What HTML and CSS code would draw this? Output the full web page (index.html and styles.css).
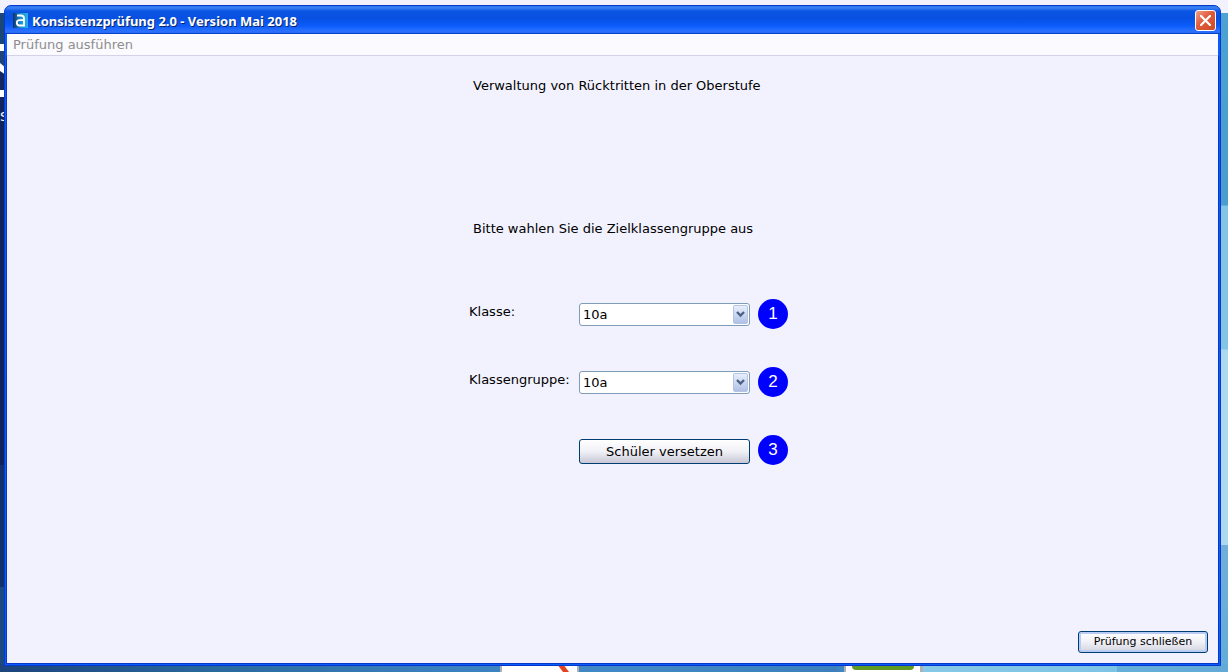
FILE: index.html
```html
<!DOCTYPE html>
<html lang="de">
<head>
    <meta charset="UTF-8">
    <meta name="viewport" content="width=device-width, initial-scale=1.0">
    <title>Konsistenzprüfung 2.0</title>
    <link rel="stylesheet" href="styles.css">
</head>
<body>
    <!-- Desktop behind the window -->
    <div class="desktop" aria-hidden="true">
        <div class="edge-left">
            <svg width="6" height="92" viewBox="0 13 6 92">
                <rect y="13" width="6" height="31" fill="#1b4778"/>
                <rect y="44" width="6" height="7" fill="#fff"/>
                <path d="M0 51h6v39H0z" fill="#13285f"/>
                <path d="M0 51h6v18L0 63z" fill="#1e4478"/>
                <path d="M0 63l6 5v7l-6-4z" fill="#fff"/>
                <rect y="90" width="6" height="7" fill="#fff"/>
                <rect y="97" width="6" height="8" fill="#12255e"/>
            </svg>
            <span class="edge-text">S</span>
        </div>
        <div class="edge-right"></div>
        <div class="edge-bottom">
            <svg class="tile tile-one" width="79" height="8" viewBox="0 0 79 8">
                <rect width="79" height="8" fill="#adb0b5"/>
                <rect x="2" width="75" height="8" fill="#fff"/>
                <path d="M57 0h6l6 8h-6z" fill="#e2431e"/>
            </svg>
            <svg class="tile tile-two" width="79" height="8" viewBox="0 0 79 8">
                <rect width="79" height="8" fill="#adb0b5"/>
                <rect x="2" width="74" height="8" fill="#fff"/>
                <path d="M8 0h62v2q0 4-4 4H12q-4 0-4-4z" fill="#5f9a24"/>
            </svg>
        </div>
    </div>

    <div class="window">
        <header class="title-bar">
            <svg class="app-icon" width="15" height="15" viewBox="0 0 15 15">
                <defs>
                    <linearGradient id="iconFill">
                        <stop offset="0" stop-color="#12306b"/>
                        <stop offset="0.5" stop-color="#1c8fcc"/>
                        <stop offset="1" stop-color="#27b0ea"/>
                    </linearGradient>
                </defs>
                <rect width="15" height="15" fill="url(#iconFill)"/>
                <path d="M4 2.500h4q3 0 3 3v7H6.500q-2.700 0-2.700-2.700T6.500 7.100H11" fill="none" stroke="#fff" stroke-width="1.800"/>
            </svg>
            <h1>Konsistenzprüfung 2.0 - Version Mai 2018</h1>
            <button type="button" class="close-button" aria-label="Schließen">
                <svg width="11" height="11" viewBox="0 0 11 11">
                    <path d="M1 1l9 9M10 1l-9 9" stroke="#fff" stroke-width="2.200" stroke-linecap="square"/>
                </svg>
            </button>
        </header>
        <nav class="menu-bar">
            <button type="button" class="menu-item" disabled>Prüfung ausführen</button>
        </nav>
        <main class="content">
            <form class="panel">
                <p class="heading">Verwaltung von Rücktritten in der Oberstufe</p>
                <p class="hint">Bitte wahlen Sie die Zielklassengruppe aus</p>
                <div class="row">
                    <label for="klasse">Klasse:</label>
                    <div class="select-box">
                        <select id="klasse"><option>10a</option></select>
                        <span class="arrow"><svg width="9" height="7" viewBox="0 0 9 7"><path d="M1 1l3.500 3.500L8 1" fill="none" stroke="#4d6185" stroke-width="2.400"/></svg></span>
                    </div>
                    <span class="badge">1</span>
                </div>
                <div class="row">
                    <label for="klassengruppe">Klassengruppe:</label>
                    <div class="select-box">
                        <select id="klassengruppe"><option>10a</option></select>
                        <span class="arrow"><svg width="9" height="7" viewBox="0 0 9 7"><path d="M1 1l3.500 3.500L8 1" fill="none" stroke="#4d6185" stroke-width="2.400"/></svg></span>
                    </div>
                    <span class="badge">2</span>
                </div>
                <div class="row">
                    <button type="button" class="button move-button">Schüler versetzen</button>
                    <span class="badge">3</span>
                </div>
            </form>
            <footer class="footer">
                <button type="button" class="button exit-button">Prüfung schließen</button>
            </footer>
        </main>
    </div>
</body>
</html>
```
FILE: styles.css
```css
* {
    box-sizing: border-box;
}
body {
    margin: 0;
    padding: 5px 7px 6px 4px;
    min-height: 100vh;
    display: flex;
    position: relative;
    background: #f2f2ff;
    font-family: Verdana, "DejaVu Sans", sans-serif;
    font-size: 13px;
    line-height: 16px;
    color: #000;
}
h1, p {
    margin: 0;
}
button, select {
    font-family: inherit;
    font-size: inherit;
    line-height: inherit;
    color: inherit;
}

/* Desktop */
.desktop {
    position: absolute;
    inset: 13px 0 0 0;
    overflow: hidden;
}
.edge-left, .edge-right {
    position: absolute;
    top: 0;
    bottom: 0;
    width: 9px;
}
.edge-left {
    left: 0;
    background: linear-gradient(#12245c 0, #11225b 452px, #12306b 452px, #12306b 574px, #1c4980 574px);
}
.edge-left svg {
    display: block;
}
.edge-text {
    display: block;
    padding-top: 4px;
    color: #fff;
}
.edge-right {
    right: 0;
    background: linear-gradient(#4ca2d4 0, #4b9dce 192px, #84c4e4 193px, #84c4e4 336px, #acd9f0 337px, #acd9f0 532px, #70afd9 532px, #63add9 100%);
}
.edge-bottom {
    position: absolute;
    left: 0;
    right: 0;
    bottom: 0;
    height: 8px;
    background: linear-gradient(to right, #1c437c 0, #296a9f 18%, #3a7fbd 35%, #4189c6 50%, #3b80bd 68%, #86c8e7 75%, #7cc4e6 91%, #65b0da 91%, #62a9d7 100%);
}
.tile {
    position: absolute;
    top: 0;
}
.tile-one {
    left: 500px;
}
.tile-two {
    left: 844px;
}

/* Window */
.window {
    position: relative;
    flex: 1;
    display: flex;
    flex-direction: column;
    border: 1px solid #0838c8;
    border-radius: 7px 7px 0 0;
    background: #0a5cff;
}
.title-bar {
    display: flex;
    align-items: center;
    height: 28px;
    padding: 2px 4px 0 8px;
    border-radius: 6px 6px 0 0;
    border-bottom: 1px solid #0a42c8;
    background: linear-gradient(#2c78f0 0, #3a80f4 2px, #0b56e4 5px, #0750e0 12px, #0b5cfb 20px, #2c71ff 25px, #2868f5 27px);
}
.title-bar h1 {
    flex: 1;
    margin-left: 4px;
    font-family: "Trebuchet MS", "Noto Sans", sans-serif;
    font-size: 13px;
    font-weight: bold;
    color: #fff;
    text-shadow: 1px 1px 0 #0a246a;
}
.close-button {
    display: flex;
    align-items: center;
    justify-content: center;
    width: 21px;
    height: 21px;
    padding: 0;
    border: 1px solid #fff;
    border-radius: 3px;
    background: linear-gradient(135deg, #f0a08c, #df5b3c 45%, #d04a26);
}
.menu-bar {
    display: flex;
    height: 22px;
    margin: 0 2px;
    padding: 0 6px;
    border-bottom: 1px solid #d4d2e6;
    background: #fafaff;
}
.menu-item {
    border: none;
    padding: 0;
    background: none;
    color: #8e8e8e;
}
.content {
    flex: 1;
    display: flex;
    flex-direction: column;
    margin: 0 2px 2px;
    padding: 22px 10px 10px;
    background: #f2f2ff;
    box-shadow: 0 0 0 1px #0838c8;
    clip-path: inset(0 -1px -1px -1px);
}

/* Form */
.panel {
    width: 287px;
    margin: 0 auto;
}
.heading, .hint {
    padding-left: 4px;
    white-space: nowrap;
}
.hint {
    margin: 127px 0 66px;
}
.row {
    position: relative;
    display: flex;
    width: 281px;
    margin-bottom: 45px;
}
.row label {
    width: 110px;
    padding-top: 1px;
}
.row:last-child {
    justify-content: flex-end;
    margin-bottom: 20px;
}
.select-box {
    position: relative;
    width: 171px;
}
.select-box select {
    display: block;
    width: 100%;
    height: 23px;
    padding: 0 20px 0 3px;
    border: 1px solid #7f9db9;
    border-radius: 3px;
    background: #fff;
    appearance: none;
}
.arrow {
    position: absolute;
    top: 2px;
    right: 2px;
    display: flex;
    align-items: center;
    justify-content: center;
    width: 15px;
    height: 19px;
    border: 1px solid #b4c4e4;
    border-radius: 2px;
    background: linear-gradient(#e8effc, #b0c0e6);
    pointer-events: none;
}
.button {
    padding: 0;
    border: 1px solid #003c74;
    border-radius: 3px;
    background: linear-gradient(#fff, #f0f0f6 50%, #c8c8d6);
}
.move-button {
    width: 171px;
    height: 25px;
}
.badge {
    position: absolute;
    top: -4px;
    left: 289px;
    width: 30px;
    height: 30px;
    border-radius: 50%;
    background: #0000ff;
    color: #fff;
    font-family: Arial, "Liberation Sans", sans-serif;
    font-size: 17px;
    line-height: 30px;
    text-align: center;
}

/* Footer */
.footer {
    display: flex;
    justify-content: flex-end;
    margin-top: auto;
}
.exit-button {
    width: 130px;
    height: 22px;
    font-size: 11px;
    background: linear-gradient(#fff, #f0f0f6 50%, #d4d4e0);
    box-shadow: inset 0 0 0 2px #b8ccf4;
}
```
